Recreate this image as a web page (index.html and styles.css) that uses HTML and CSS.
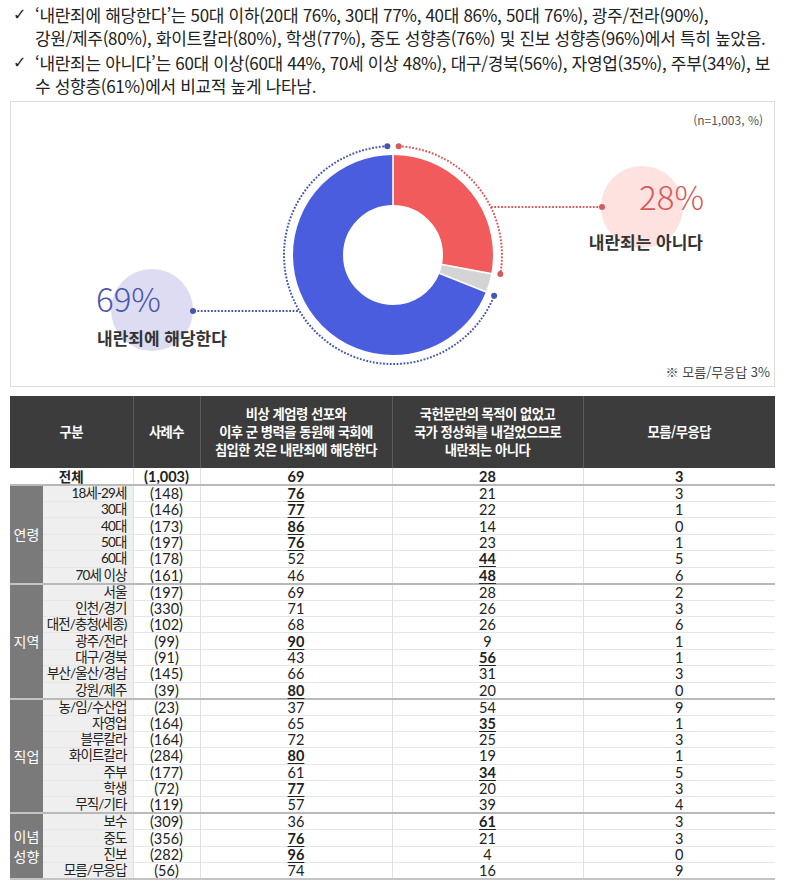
FILE: index.html
```html
<!DOCTYPE html>
<html lang="ko">
<head>
<meta charset="utf-8">
<title>내란죄 해당 여부 여론조사</title>
<link rel="stylesheet" href="styles.css">
</head>
<body>
<div class="summary">
  <p class="point"><span class="check">✓</span><span class="ptext">‘내란죄에 해당한다’는 50대 이하(20대 76%, 30대 77%, 40대 86%, 50대 76%), 광주/전라(90%),<br>강원/제주(80%), 화이트칼라(80%), 학생(77%), 중도 성향층(76%) 및 진보 성향층(96%)에서 특히 높았음.</span></p>
  <p class="point"><span class="check">✓</span><span class="ptext">‘내란죄는 아니다’는 60대 이상(60대 44%, 70세 이상 48%), 대구/경북(56%), 자영업(35%), 주부(34%), 보<br>수 성향층(61%)에서 비교적 높게 나타남.</span></p>
</div>

<div class="chart">
  <svg class="donut" width="763" height="284" viewBox="11 104 763 284" xmlns="http://www.w3.org/2000/svg">
    <circle cx="152" cy="312" r="41" fill="#dedcf3"/>
    <circle cx="642" cy="209" r="41" fill="#fde2e0"/>

    <g transform="rotate(-90 393 257)" fill="none" stroke-width="50">
      <circle cx="393" cy="257" r="75" stroke="#f25b5b" stroke-dasharray="131.95 471.24"/>
      <circle cx="393" cy="257" r="75" stroke="#d4d4d4" stroke-dasharray="14.14 471.24" stroke-dashoffset="-131.95"/>
      <circle cx="393" cy="257" r="75" stroke="#4a5ddf" stroke-dasharray="325.15 471.24" stroke-dashoffset="-146.09"/>
    </g>
    <g stroke="#fff" stroke-width="1.6">
      <line x1="393" y1="208" x2="393" y2="155"/>
      <line x1="441.1" y1="266.2" x2="492.2" y2="275.9"/>
      <line x1="438.6" y1="275" x2="486.9" y2="294.2"/>
    </g>

    <g fill="none" stroke-width="2" stroke-dasharray="1.8 1.6">
      <path d="M398.7 148.2 A109 109 0 0 1 500.3 275.9" stroke="#d65a5c"/>
      <line x1="490.9" y1="209" x2="601" y2="209" stroke="#d65a5c"/>
      <path d="M387.3 148.2 A109 109 0 1 0 494.1 297.8" stroke="#4557ad"/>
      <line x1="194" y1="313" x2="299.5" y2="313" stroke="#4557ad"/>
    </g>
    <g fill="#d65a5c">
      <circle cx="398.7" cy="148.2" r="3"/>
      <circle cx="500.3" cy="275.9" r="3"/>
      <circle cx="602" cy="209" r="3"/>
    </g>
    <g fill="#4557ad">
      <circle cx="387.3" cy="148.2" r="3"/>
      <circle cx="494.1" cy="297.8" r="3"/>
      <circle cx="193" cy="313" r="3"/>
    </g>

    <text class="pct pct-yes" x="96" y="314">69%</text>
    <text class="lbl" x="97" y="347">내란죄에 해당한다</text>
    <text class="pct pct-no" x="704" y="212" text-anchor="end">28%</text>
    <text class="lbl" x="703" y="251" text-anchor="end">내란죄는 아니다</text>
    <text class="note" x="763" y="127" text-anchor="end">(n=1,003, %)</text>
    <text class="note note-dk" x="770" y="379" text-anchor="end">※ 모름/무응답 3%</text>
  </svg>
</div>

<table class="crosstab">
  <colgroup>
    <col class="c-grp"><col class="c-sub"><col class="c-n"><col class="c-v"><col class="c-v2"><col class="c-v">
  </colgroup>
  <thead>
    <tr>
      <th colspan="2">구분</th>
      <th>사례수</th>
      <th>비상 계엄령 선포와<br>이후 군 병력을 동원해 국회에<br>침입한 것은 내란죄에 해당한다</th>
      <th>국헌문란의 목적이 없었고<br>국가 정상화를 내걸었으므로<br>내란죄는 아니다</th>
      <th>모름/무응답</th>
    </tr>
  </thead>
  <tbody class="total">
    <tr><td colspan="2" class="ko">전체</td><td class="n">(1,003)</td><td class="v">69</td><td class="v">28</td><td class="v">3</td></tr>
  </tbody>
  <tbody class="group">
    <tr><th class="grp" rowspan="6">연령</th><td class="sub">18세-29세</td><td class="n">(148)</td><td class="v"><b class="hl">76</b></td><td class="v">21</td><td class="v">3</td></tr>
    <tr><td class="sub">30대</td><td class="n">(146)</td><td class="v"><b class="hl">77</b></td><td class="v">22</td><td class="v">1</td></tr>
    <tr><td class="sub">40대</td><td class="n">(173)</td><td class="v"><b class="hl">86</b></td><td class="v">14</td><td class="v">0</td></tr>
    <tr><td class="sub">50대</td><td class="n">(197)</td><td class="v"><b class="hl">76</b></td><td class="v">23</td><td class="v">1</td></tr>
    <tr><td class="sub">60대</td><td class="n">(178)</td><td class="v">52</td><td class="v"><b class="hl">44</b></td><td class="v">5</td></tr>
    <tr><td class="sub">70세 이상</td><td class="n">(161)</td><td class="v">46</td><td class="v"><b class="hl">48</b></td><td class="v">6</td></tr>
  </tbody>
  <tbody class="group">
    <tr><th class="grp" rowspan="7">지역</th><td class="sub">서울</td><td class="n">(197)</td><td class="v">69</td><td class="v">28</td><td class="v">2</td></tr>
    <tr><td class="sub">인천/경기</td><td class="n">(330)</td><td class="v">71</td><td class="v">26</td><td class="v">3</td></tr>
    <tr><td class="sub">대전/충청(세종)</td><td class="n">(102)</td><td class="v">68</td><td class="v">26</td><td class="v">6</td></tr>
    <tr><td class="sub">광주/전라</td><td class="n">(99)</td><td class="v"><b class="hl">90</b></td><td class="v">9</td><td class="v">1</td></tr>
    <tr><td class="sub">대구/경북</td><td class="n">(91)</td><td class="v">43</td><td class="v"><b class="hl">56</b></td><td class="v">1</td></tr>
    <tr><td class="sub">부산/울산/경남</td><td class="n">(145)</td><td class="v">66</td><td class="v">31</td><td class="v">3</td></tr>
    <tr><td class="sub">강원/제주</td><td class="n">(39)</td><td class="v"><b class="hl">80</b></td><td class="v">20</td><td class="v">0</td></tr>
  </tbody>
  <tbody class="group">
    <tr><th class="grp" rowspan="7">직업</th><td class="sub">농/임/수산업</td><td class="n">(23)</td><td class="v">37</td><td class="v">54</td><td class="v">9</td></tr>
    <tr><td class="sub">자영업</td><td class="n">(164)</td><td class="v">65</td><td class="v"><b class="hl">35</b></td><td class="v">1</td></tr>
    <tr><td class="sub">블루칼라</td><td class="n">(164)</td><td class="v">72</td><td class="v">25</td><td class="v">3</td></tr>
    <tr><td class="sub">화이트칼라</td><td class="n">(284)</td><td class="v"><b class="hl">80</b></td><td class="v">19</td><td class="v">1</td></tr>
    <tr><td class="sub">주부</td><td class="n">(177)</td><td class="v">61</td><td class="v"><b class="hl">34</b></td><td class="v">5</td></tr>
    <tr><td class="sub">학생</td><td class="n">(72)</td><td class="v"><b class="hl">77</b></td><td class="v">20</td><td class="v">3</td></tr>
    <tr><td class="sub">무직/기타</td><td class="n">(119)</td><td class="v">57</td><td class="v">39</td><td class="v">4</td></tr>
  </tbody>
  <tbody class="group last">
    <tr><th class="grp" rowspan="4">이념<br>성향</th><td class="sub">보수</td><td class="n">(309)</td><td class="v">36</td><td class="v"><b class="hl">61</b></td><td class="v">3</td></tr>
    <tr><td class="sub">중도</td><td class="n">(356)</td><td class="v"><b class="hl">76</b></td><td class="v">21</td><td class="v">3</td></tr>
    <tr><td class="sub">진보</td><td class="n">(282)</td><td class="v"><b class="hl">96</b></td><td class="v">4</td><td class="v">0</td></tr>
    <tr><td class="sub">모름/무응답</td><td class="n">(56)</td><td class="v">74</td><td class="v">16</td><td class="v">9</td></tr>
  </tbody>
</table>
</body>
</html>
```

FILE: styles.css
```css
html, body {
  margin: 0;
  padding: 0;
  background: #fff;
}
body {
  font-family: "Noto Sans CJK KR", "Noto Sans", sans-serif;
  color: #222;
  width: 800px;
}

.summary {
  padding-top: 3px;
}
.point {
  display: flex;
  margin: 0 0 2px 0;
  font-size: 17px;
  line-height: 23px;
  letter-spacing: -0.32px;
}
.check {
  width: 22px;
  padding-left: 13px;
  flex: none;
  font-family: "DejaVu Sans", sans-serif;
  font-size: 16px;
}
.ptext {
  white-space: nowrap;
}

.chart {
  margin: 4px 0 0 10px;
  width: 763px;
  height: 284px;
  border: 1px solid #dcdcdc;
}
.donut {
  display: block;
  font-family: "Noto Sans CJK KR", sans-serif;
}
.pct {
  font-size: 33px;
  font-weight: 300;
}
.pct-yes { fill: #4a57a9; }
.pct-no { fill: #d55b5c; }
.lbl {
  font-size: 17px;
  font-weight: 700;
  fill: #333;
}
.note {
  font-size: 12px;
  fill: #555;
}
.note-dk {
  font-size: 13px;
  fill: #444;
}

.crosstab {
  margin: 9px 0 0 10px;
  width: 765px;
  border-collapse: collapse;
  table-layout: fixed;
  font-family: Lato, "Noto Sans CJK KR", sans-serif;
  font-size: 14.5px;
  color: #222;
}
.c-grp { width: 33px; }
.c-sub { width: 90px; }
.c-n { width: 67px; }
.c-v { width: 192px; }
.c-v2 { width: 191px; }

.crosstab thead th {
  background: #3c3c3c;
  color: #fff;
  font-family: "Noto Sans CJK KR", sans-serif;
  font-weight: 700;
  font-size: 13.3px;
  line-height: 18px;
  height: 72px;
  padding: 0;
  letter-spacing: -0.5px;
  border-left: 1px solid #5c5c5c;
  text-align: center;
}
.crosstab thead th:first-child { border-left: none; }

.crosstab td {
  padding: 0;
  line-height: 15px;
  text-align: center;
  border-left: 1px solid #e0e0e0;
}
.total td {
  height: 16px;
  font-weight: 700;
  border-left: 1px solid #e0e0e0;
}
.total td:first-child { border-left: none; }
.crosstab td.ko {
  font-family: "Noto Sans CJK KR", sans-serif;
  font-size: 13.5px;
}
.group tr { height: 16.4px; }
.group td {
  border-top: 1px solid #e6e6e6;
}
.group tr:first-child td,
.group tr:first-child th {
  border-top: 2px solid #b9b9b9;
}
.group.last tr:last-child td {
  border-bottom: 2px solid #c4c4c4;
}
.grp {
  background: #7a7a7a;
  color: #fff;
  font-family: "Noto Sans CJK KR", sans-serif;
  font-weight: 400;
  font-size: 14px;
  line-height: 20px;
  padding: 0;
  text-align: center;
  border-bottom: 2px solid #c4c4c4;
}
.crosstab td.sub {
  background: #eeefee;
  text-align: right;
  padding-right: 6px;
  font-size: 13.5px;
  letter-spacing: -0.9px;
  border-left: none;
}
.hl {
  font-weight: 700;
  text-decoration: underline;
  text-underline-offset: 2px;
}
```
